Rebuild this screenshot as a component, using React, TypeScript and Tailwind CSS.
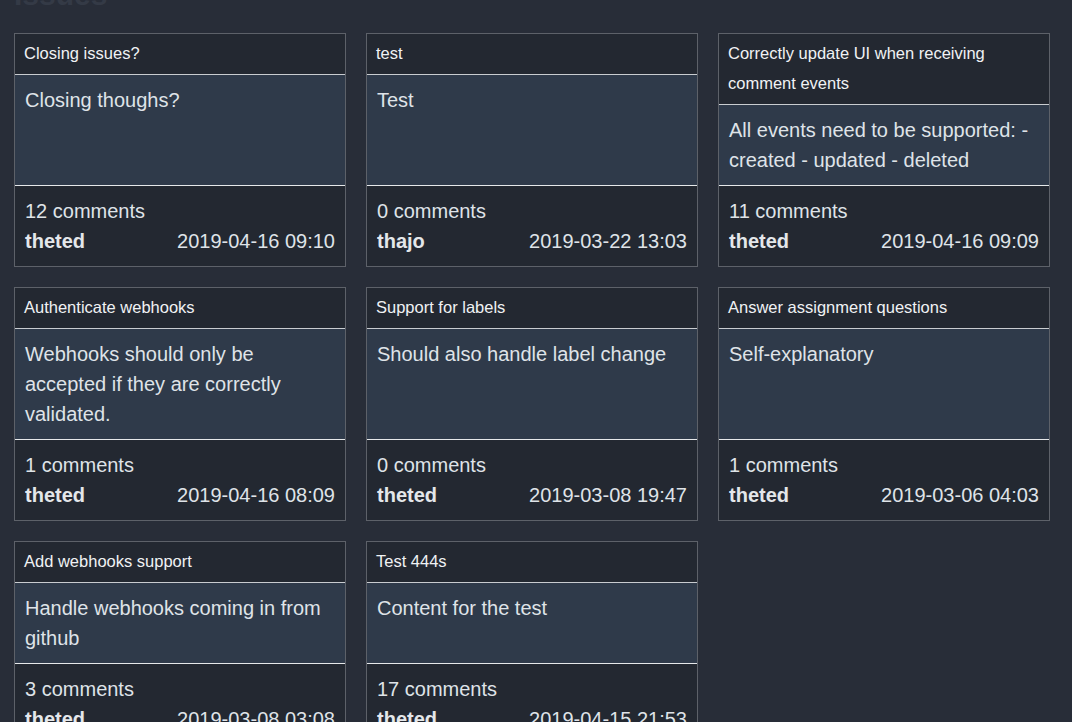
import React from "react";

type Issue = {
  title: string;
  body: string;
  comments: number;
  author: string;
  date: string;
};

const issues: Issue[] = [
  { title: "Closing issues?", body: "Closing thoughs?", comments: 12, author: "theted", date: "2019-04-16 09:10" },
  { title: "test", body: "Test", comments: 0, author: "thajo", date: "2019-03-22 13:03" },
  { title: "Correctly update UI when receiving comment events", body: "All events need to be supported: - created - updated - deleted", comments: 11, author: "theted", date: "2019-04-16 09:09" },
  { title: "Authenticate webhooks", body: "Webhooks should only be accepted if they are correctly validated.", comments: 1, author: "theted", date: "2019-04-16 08:09" },
  { title: "Support for labels", body: "Should also handle label change", comments: 0, author: "theted", date: "2019-03-08 19:47" },
  { title: "Answer assignment questions", body: "Self-explanatory", comments: 1, author: "theted", date: "2019-03-06 04:03" },
  { title: "Add webhooks support", body: "Handle webhooks coming in from github", comments: 3, author: "theted", date: "2019-03-08 03:08" },
  { title: "Test 444s", body: "Content for the test", comments: 17, author: "theted", date: "2019-04-15 21:53" },
];

function Card({ issue }: { issue: Issue }) {
  return (
    <div className="flex flex-col border border-[#5d6169] bg-[#232831]">
      <div className="px-[9px] pt-[4px] pb-[6px] text-[16.5px] leading-[30px] text-[#f0f2f4] border-b border-[#c9ccd0] bg-[#232831]">
        {issue.title}
      </div>
      <div className="flex-1 px-[10px] py-[10px] text-[20px] leading-[30px] text-[#dfe3e8] bg-[#2f3a4a] border-b border-[#e6e8ea]">
        {issue.body}
      </div>
      <div className="px-[10px] py-[10px] text-[20px] leading-[30px] text-[#dfe3e8] bg-[#232831]">
        <div>{issue.comments} comments</div>
        <div className="flex justify-between">
          <span className="font-bold text-[#e4e7ea]">{issue.author}</span>
          <span>{issue.date}</span>
        </div>
      </div>
    </div>
  );
}

export default function App() {
  return (
    <div
      className="min-h-[722px] h-[722px] overflow-hidden bg-[#282d38] pl-[14px]"
      style={{ fontFamily: '"Liberation Sans", Arial, sans-serif' }}
    >
      <h1 className="mt-[-24px] text-[30px] leading-[37px] font-bold text-[#343a46]">Issues</h1>
      <div className="mt-[20px] grid grid-cols-[332px_332px_332px] gap-[20px]">
        {issues.map((i) => (
          <Card key={i.title} issue={i} />
        ))}
      </div>
    </div>
  );
}
